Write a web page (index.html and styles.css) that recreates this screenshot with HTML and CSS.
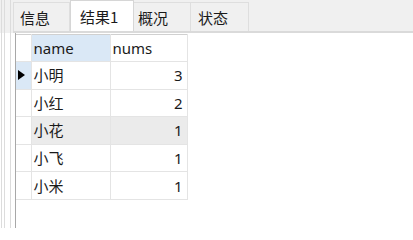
FILE: index.html
```html
<!DOCTYPE html>
<html lang="zh">
<head>
<meta charset="utf-8">
<link rel="stylesheet" href="styles.css">
</head>
<body>
<div class="app">
  <div class="side"></div>
  <div class="main">
    <div class="tabs">
      <div class="tab t1">信息</div>
      <div class="tab t2 active">结果1</div>
      <div class="tab t3">概况</div>
      <div class="tab t4">状态</div>
    </div>
    <div class="panel">
      <table class="grid">
        <colgroup><col class="c-rh"><col class="c-name"><col class="c-num"></colgroup>
        <thead>
          <tr class="hrow"><th class="rh"></th><th class="name sel">name</th><th class="name">nums</th></tr>
        </thead>
        <tbody>
          <tr><td class="rh cur"><span class="mark"></span></td><td class="name">小明</td><td class="num">3</td></tr>
          <tr><td class="rh"></td><td class="name">小红</td><td class="num">2</td></tr>
          <tr class="hl"><td class="rh"></td><td class="name">小花</td><td class="num">1</td></tr>
          <tr><td class="rh"></td><td class="name">小飞</td><td class="num">1</td></tr>
          <tr><td class="rh"></td><td class="name">小米</td><td class="num">1</td></tr>
        </tbody>
      </table>
    </div>
  </div>
</div>
</body>
</html>
```

FILE: styles.css
```css
html, body {
  margin: 0;
  padding: 0;
  background: #ffffff;
}
body {
  width: 413px;
  height: 228px;
  overflow: hidden;
  font-family: "Noto Sans", "Noto Sans CJK SC", sans-serif;
  color: #1a1a1a;
}
.app {
  display: flex;
  width: 413px;
  height: 228px;
}
.side {
  width: 13px;
  flex: none;
  background:
    linear-gradient(#dcdcdc, #dcdcdc) 1px 0 / 1px 100% no-repeat,
    linear-gradient(#dcdcdc, #dcdcdc) 4px 0 / 1px 100% no-repeat,
    linear-gradient(#dcdcdc, #dcdcdc) 10px 0 / 1px 100% no-repeat,
    linear-gradient(#f0f0f0, #f0f0f0) 0 0 / 100% 33px no-repeat,
    #ffffff;
}
.main {
  flex: 1;
  display: flex;
  flex-direction: column;
}
.tabs {
  height: 31px;
  display: flex;
  align-items: flex-end;
  background: #f0f0f0;
  border-bottom: 2px solid #dadada;
}
.tab {
  box-sizing: border-box;
  height: 29px;
  display: flex;
  align-items: center;
  font-family: "Noto Sans CJK SC", "Noto Sans", sans-serif;
  font-size: 15px;
  color: #1a1a1a;
  background: #f0f0f0;
  border: 1px solid #dedede;
  border-bottom: none;
}
.tab.active {
  height: 31px;
  background: #ffffff;
  border-color: #d6d6d6;
}
.t1 { width: 57px; padding-left: 6px; }
.t2 { width: 64px; padding-left: 9px; }
.t3 { width: 57px; padding-left: 4px; border-left: none; }
.t4 { width: 58px; padding-left: 7px; border-left: none; }
.t2 + .t3 { border-left: none; }
.panel {
  flex: 1;
  margin-left: 2px;
  border-left: 1px solid #a8a8a8;
  padding-top: 1px;
}
.grid {
  border-collapse: collapse;
  table-layout: fixed;
  width: 171px;
  font-size: 15px;
}
.c-rh { width: 15px; }
.c-name { width: 79px; }
.c-num { width: 77px; }
.grid th, .grid td {
  border: 1px solid #e4e4e4;
  padding: 0;
  font-weight: normal;
  line-height: 18px;
  white-space: nowrap;
  overflow: hidden;
}
.grid thead th {
  border-top-color: #d0d0d0;
}
.grid .rh {
  border-left: none;
}
.hrow th { height: 26px; text-align: left; }
.grid tbody td { height: 26.6px; }
.name { padding-left: 2px !important; }
.num { text-align: right; padding-right: 4px !important; }
.sel { background: #dae8f6; }
.cur { background: #dae8f6; position: relative; }
.hl td.name, .hl td.num { background: #ebebeb; }
.mark {
  display: block;
  width: 0;
  height: 0;
  margin-left: 2px;
  border-top: 5px solid transparent;
  border-bottom: 5px solid transparent;
  border-left: 7px solid #000000;
}
```
